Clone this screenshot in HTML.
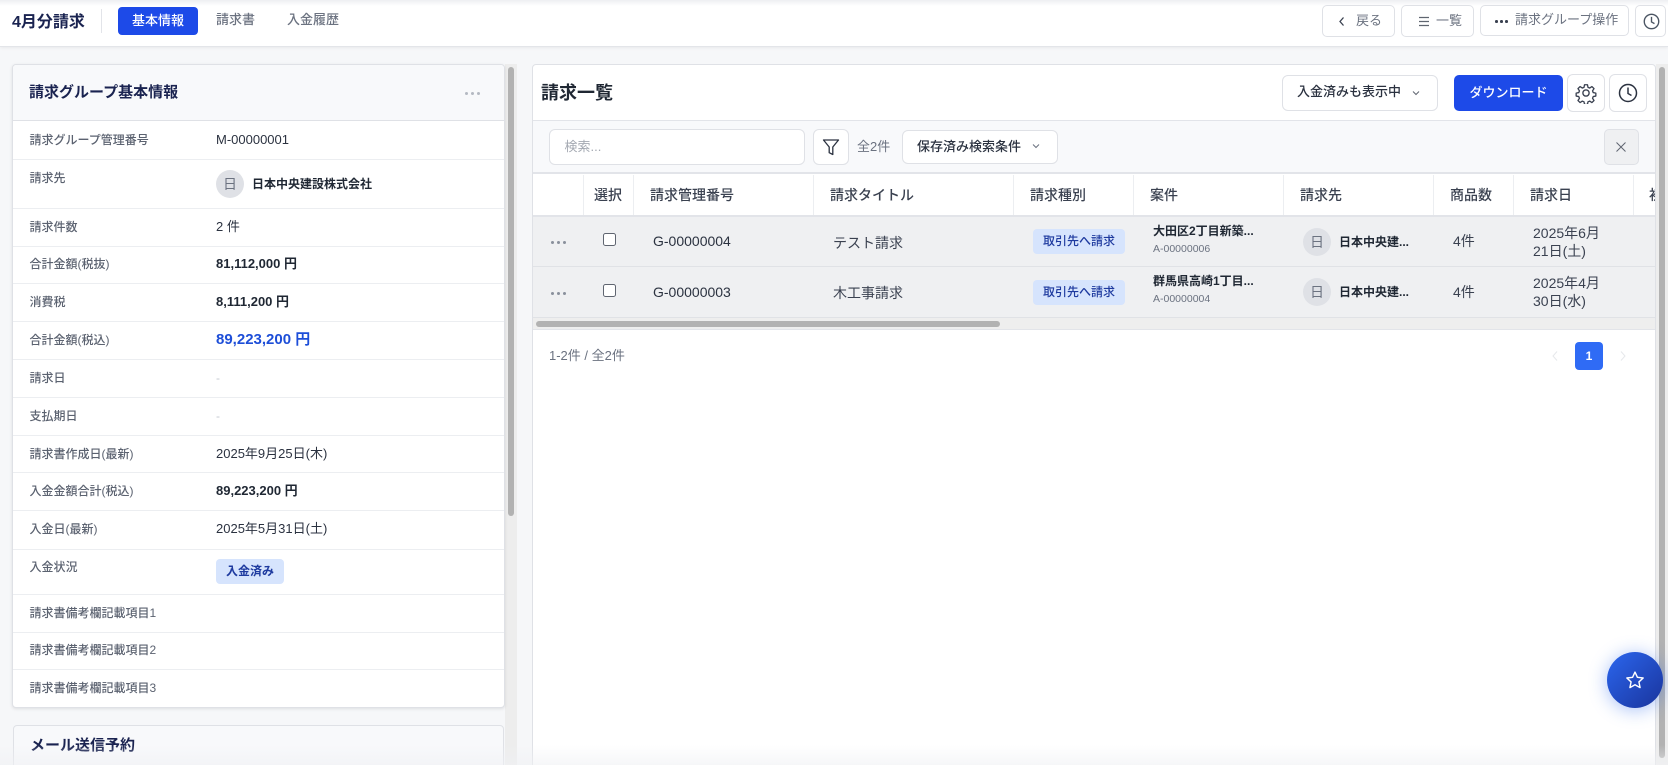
<!DOCTYPE html>
<html lang="ja">
<head>
<meta charset="utf-8">
<title>4月分請求</title>
<style>
*{box-sizing:border-box}
html,body{margin:0;padding:0;width:1668px;height:765px;overflow:hidden;background:#f6f7f9;font-family:"Liberation Sans","Noto Sans CJK JP",sans-serif;color:#1f2937}
#p{position:relative;width:1668px;height:765px;overflow:hidden;background:#f6f7f9}
.a{position:absolute}
.t{position:absolute;white-space:nowrap;line-height:20px;height:20px}
.btn{position:absolute;background:#fff;border:1px solid #dfe1e6;border-radius:5px}
.l{font-size:12px;color:#5b6270;left:29.5px;font-weight:500}
.v{font-size:13px;color:#2b3240;left:216px}
.b{font-weight:700;color:#1f2733}
.rl{position:absolute;left:13px;width:491px;height:1px;background:#eceef1}
.th{font-size:14px;color:#3a4150;font-weight:500;top:185px}
.cl{position:absolute;top:175px;width:1px;height:40px;background:#eceef1}
.av{position:absolute;width:28px;height:28px;border-radius:50%;background:#dfe1e6;color:#6b7280;font-size:14px;line-height:28px;text-align:center}
.bd{position:absolute;background:#d6e4fd;color:#1e3a9f;border-radius:4px;font-size:12px;font-weight:500;text-align:center;line-height:25px;height:25px}
.dots{position:absolute;width:3px;height:3px;border-radius:50%;background:#8a909c;box-shadow:6px 0 0 #8a909c,12px 0 0 #8a909c}
.cb{position:absolute;width:13px;height:13px;background:#fff;border:1px solid #5f6570;border-radius:2.5px}
svg{position:absolute;display:block}
</style>
</head>
<body>
<div id="p">

<!-- left panel -->
<div class="a" style="left:505px;top:64px;width:12px;height:701px;background:#ededed"></div>
<div class="a" style="left:508px;top:67px;width:6px;height:449px;background:#b2b2b2;border-radius:3px"></div>

<div class="a" style="left:12px;top:64px;width:493px;height:644px;background:#fff;border:1px solid #dfe1e6;border-radius:4px;box-shadow:0 1px 3px rgba(0,0,0,.1)"></div>
<div class="a" style="left:13px;top:65px;width:491px;height:56px;background:#f8f9fb;border-bottom:1px solid #dfe1e6;border-radius:4px 4px 0 0"></div>
<div class="t" style="left:29px;top:83px;font-size:15px;font-weight:700;color:#1a2350">請求グループ基本情報</div>
<div class="dots" style="left:465px;top:92px;background:#b4b9c2;box-shadow:6px 0 0 #b4b9c2,12px 0 0 #b4b9c2"></div>

<div class="rl" style="top:159px"></div>
<div class="rl" style="top:208px"></div>
<div class="rl" style="top:246px"></div>
<div class="rl" style="top:283px"></div>
<div class="rl" style="top:321px"></div>
<div class="rl" style="top:359px"></div>
<div class="rl" style="top:397px"></div>
<div class="rl" style="top:435px"></div>
<div class="rl" style="top:472px"></div>
<div class="rl" style="top:510px"></div>
<div class="rl" style="top:549px"></div>
<div class="rl" style="top:594px"></div>
<div class="rl" style="top:632px"></div>
<div class="rl" style="top:669px"></div>

<div class="t l" style="top:130px">請求グループ管理番号</div>
<div class="t v" style="top:130px">M-00000001</div>
<div class="t l" style="top:168px">請求先</div>
<div class="av" style="left:216px;top:170px">日</div>
<div class="t b" style="left:252px;top:174px;font-size:12px">日本中央建設株式会社</div>
<div class="t l" style="top:217px">請求件数</div>
<div class="t v" style="top:217px">2 件</div>
<div class="t l" style="top:254px">合計金額(税抜)</div>
<div class="t v b" style="top:254px">81,112,000 円</div>
<div class="t l" style="top:292px">消費税</div>
<div class="t v b" style="top:292px">8,111,200 円</div>
<div class="t l" style="top:330px">合計金額(税込)</div>
<div class="t v" style="top:330px;font-size:15px;font-weight:700;color:#1d4ed8">89,223,200 円</div>
<div class="t l" style="top:368px">請求日</div>
<div class="t v" style="top:368px;color:#c4c9d1;font-size:12px">-</div>
<div class="t l" style="top:406px">支払期日</div>
<div class="t v" style="top:406px;color:#c4c9d1;font-size:12px">-</div>
<div class="t l" style="top:444px">請求書作成日(最新)</div>
<div class="t v" style="top:444px">2025年9月25日(木)</div>
<div class="t l" style="top:481px">入金金額合計(税込)</div>
<div class="t v b" style="top:481px">89,223,200 円</div>
<div class="t l" style="top:519px">入金日(最新)</div>
<div class="t v" style="top:519px">2025年5月31日(土)</div>
<div class="t l" style="top:557px">入金状況</div>
<div class="bd" style="left:216px;top:559px;width:68px;font-weight:700">入金済み</div>
<div class="t l" style="top:603px">請求書備考欄記載項目1</div>
<div class="t l" style="top:640px">請求書備考欄記載項目2</div>
<div class="t l" style="top:678px">請求書備考欄記載項目3</div>

<div class="a" style="left:13px;top:725px;width:491px;height:60px;background:#f8f9fb;border:1px solid #dfe1e6;border-radius:4px"></div>
<div class="t" style="left:30px;top:736px;font-size:15px;font-weight:700;color:#1a2350">メール送信予約</div>

<!-- right card -->
<div class="a" style="left:532px;top:64px;width:1124px;height:720px;background:#fff;border:1px solid #dfe1e6;border-radius:4px 4px 0 0"></div>
<div class="a" style="left:533px;top:120px;width:1122px;height:54px;background:#f8f9fb;border-top:1px solid #e2e4e9;border-bottom:2px solid #e2e4e9"></div>
<div class="t" style="left:541px;top:83px;font-size:18px;font-weight:700;color:#1f2733">請求一覧</div>

<div class="btn" style="left:1282px;top:75px;width:156px;height:36px;border-radius:6px"></div>
<div class="t" style="left:1297px;top:82px;font-size:13px;font-weight:500;color:#2b3240">入金済みも表示中</div>
<svg style="left:1411px;top:88px" width="10" height="10" viewBox="0 0 10 10"><path d="M2 3.500L5 6.500l3-3" fill="none" stroke="#5f6570" stroke-width="1"/></svg>
<div class="a" style="left:1454px;top:75px;width:109px;height:36px;background:#1d4ae8;border-radius:5px;color:#fff;font-size:13px;font-weight:500;line-height:35px;text-align:center">ダウンロード</div>
<div class="btn" style="left:1567px;top:74px;width:38px;height:38px;border-radius:6px"></div>
<svg style="left:1575px;top:82px" width="22" height="22" viewBox="0 0 24 24" fill="none" stroke="#3a4150" stroke-width="1.500" stroke-linejoin="round"><path d="M10.300 2.500h3.400l.6 3 1.900.8 2.600-1.700 2.400 2.400-1.700 2.600.8 1.900 3 .6v3.400l-3 .6-.8 1.900 1.700 2.600-2.400 2.400-2.600-1.700-1.900.8-.6 3h-3.400l-.6-3-1.900-.8-2.600 1.700-2.400-2.400 1.700-2.600-.8-1.900-3-.6v-3.400l3-.6.8-1.900-1.700-2.600 2.400-2.400 2.600 1.700 1.900-.8z" transform="translate(.6 .6) scale(.95)"/><circle cx="12" cy="12" r="3.400"/></svg>
<div class="btn" style="left:1609px;top:74px;width:38px;height:38px;border-radius:6px"></div>
<svg style="left:1618px;top:83px" width="20" height="20" viewBox="0 0 20 20" fill="none" stroke="#2b3240" stroke-width="1.500"><circle cx="10" cy="10" r="8.500"/><path d="M10 4.500V10.500l3.500 2"/></svg>

<!-- toolbar -->
<div class="btn" style="left:549px;top:129px;width:256px;height:36px;border-radius:6px"></div>
<div class="t" style="left:564.5px;top:137px;font-size:13px;color:#a4a9b2">検索...</div>
<div class="btn" style="left:813px;top:129px;width:36px;height:36px;border-radius:6px"></div>
<svg style="left:822px;top:138px" width="18" height="18" viewBox="0 0 18 18" fill="none" stroke="#2b3240" stroke-width="1.300" stroke-linejoin="round"><path d="M1.500 2h15l-5.700 7v7.500l-3.600-1.800V9z"/></svg>
<div class="t" style="left:857px;top:137px;font-size:13px;color:#6b7280">全2件</div>
<div class="btn" style="left:902px;top:130px;width:156px;height:34px;border-radius:6px"></div>
<div class="t" style="left:917px;top:137px;font-size:13px;font-weight:500;color:#2b3240">保存済み検索条件</div>
<svg style="left:1031px;top:141px" width="10" height="10" viewBox="0 0 10 10"><path d="M2 3.500L5 6.500l3-3" fill="none" stroke="#6b7280" stroke-width="1"/></svg>
<div class="a" style="left:1604px;top:129px;width:35px;height:36px;background:#eff0f2;border:1px solid #dfe1e6;border-radius:5px"></div>
<svg style="left:1615px;top:141px" width="12" height="12" viewBox="0 0 12 12"><path d="M1.500 1.500l9 9M10.500 1.500l-9 9" stroke="#5f6570" stroke-width="1" fill="none"/></svg>

<!-- table head -->
<div class="cl" style="left:583px"></div>
<div class="cl" style="left:633px"></div>
<div class="cl" style="left:813px"></div>
<div class="cl" style="left:1013px"></div>
<div class="cl" style="left:1133px"></div>
<div class="cl" style="left:1283px"></div>
<div class="cl" style="left:1433px"></div>
<div class="cl" style="left:1513px"></div>
<div class="cl" style="left:1633px"></div>
<div class="t th" style="left:594px">選択</div>
<div class="t th" style="left:650px">請求管理番号</div>
<div class="t th" style="left:830px">請求タイトル</div>
<div class="t th" style="left:1030px">請求種別</div>
<div class="t th" style="left:1150px">案件</div>
<div class="t th" style="left:1300px">請求先</div>
<div class="t th" style="left:1450px">商品数</div>
<div class="t th" style="left:1530px">請求日</div>
<div class="a" style="left:1649px;top:175px;width:6px;height:40px;overflow:hidden"><div class="t th" style="left:0;top:10px">初</div></div>

<!-- rows -->
<div class="a" style="left:533px;top:215px;width:1122px;height:2px;background:#e2e4e9"></div>
<div class="a" style="left:533px;top:217px;width:1122px;height:50px;background:#eff0f2;border-bottom:1px solid #e0e2e6"></div>
<div class="a" style="left:533px;top:267px;width:1122px;height:51px;background:#eff0f2;border-bottom:1px solid #e0e2e6"></div>
<div class="a" style="left:533px;top:318px;width:1122px;height:12px;background:#eeeeee;border-bottom:1px solid #e2e4e9"></div>
<div class="a" style="left:536px;top:321px;width:464px;height:6px;background:#b2b2b2;border-radius:3px"></div>

<div class="dots" style="left:551px;top:241px"></div>
<div class="cb" style="left:603px;top:233px"></div>
<div class="t" style="left:653px;top:231px;font-size:14px;color:#2b3240">G-00000004</div>
<div class="t" style="left:833px;top:233px;font-size:14px;color:#3a4150">テスト請求</div>
<div class="bd" style="left:1033px;top:229px;width:92px">取引先へ請求</div>
<div class="t b" style="left:1153px;top:221px;font-size:12px">大田区2丁目新築...</div>
<div class="t" style="left:1153px;top:239px;font-size:10.500px;color:#6b7280">A-00000006</div>
<div class="av" style="left:1303px;top:228px">日</div>
<div class="t b" style="left:1339px;top:232px;font-size:12px">日本中央建...</div>
<div class="t" style="left:1453px;top:231px;font-size:14px;color:#3a4150">4件</div>
<div class="a" style="left:1533px;top:224px;font-size:14px;line-height:18px;color:#3a4150;white-space:nowrap">2025年6月<br>21日(土)</div>

<div class="dots" style="left:551px;top:292px"></div>
<div class="cb" style="left:603px;top:284px"></div>
<div class="t" style="left:653px;top:282px;font-size:14px;color:#2b3240">G-00000003</div>
<div class="t" style="left:833px;top:283px;font-size:14px;color:#3a4150">木工事請求</div>
<div class="bd" style="left:1033px;top:280px;width:92px">取引先へ請求</div>
<div class="t b" style="left:1153px;top:271px;font-size:12px">群馬県高崎1丁目...</div>
<div class="t" style="left:1153px;top:289px;font-size:10.500px;color:#6b7280">A-00000004</div>
<div class="av" style="left:1303px;top:278px">日</div>
<div class="t b" style="left:1339px;top:282px;font-size:12px">日本中央建...</div>
<div class="t" style="left:1453px;top:282px;font-size:14px;color:#3a4150">4件</div>
<div class="a" style="left:1533px;top:274px;font-size:14px;line-height:18px;color:#3a4150;white-space:nowrap">2025年4月<br>30日(水)</div>

<!-- pagination -->
<div class="t" style="left:549px;top:346px;font-size:13px;color:#6b7280">1-2件 / 全2件</div>
<svg style="left:1551px;top:350px" width="8" height="12" viewBox="0 0 8 12"><path d="M6 1.500L2 6l4 4.500" fill="none" stroke="#e6e8eb" stroke-width="1"/></svg>
<div class="a" style="left:1575px;top:342px;width:28px;height:28px;background:#2f6bf5;border-radius:4px;color:#fff;font-size:12px;font-weight:700;line-height:28px;text-align:center">1</div>
<svg style="left:1619px;top:350px" width="8" height="12" viewBox="0 0 8 12"><path d="M2 1.500L6 6l-4 4.500" fill="none" stroke="#e6e8eb" stroke-width="1"/></svg>

<!-- right scrollbar -->
<div class="a" style="left:1656px;top:64px;width:12px;height:701px;background:#ededed"></div>
<div class="a" style="left:1659px;top:67px;width:6px;height:691px;background:#b2b2b2;border-radius:3px"></div>

<!-- bottom fade -->
<div class="a" style="left:0;top:745px;width:1668px;height:20px;background:linear-gradient(to bottom,rgba(246,247,249,0),rgba(240,241,244,.6))"></div>

<!-- FAB -->
<div class="a" style="left:1607px;top:652px;width:56px;height:56px;border-radius:50%;background:linear-gradient(135deg,#2b66ee,#1a349c);box-shadow:0 2px 18px rgba(37,99,235,.4)"></div>
<svg style="left:1625px;top:670px" width="20" height="20" viewBox="0 0 24 24" fill="none" stroke="#fff" stroke-width="1.700" stroke-linejoin="round"><path d="M12 2.500l2.900 6.300 6.900.8-5.100 4.700 1.400 6.800L12 17.700l-6.100 3.400 1.400-6.800-5.100-4.700 6.900-.8z"/></svg>

<!-- header -->
<div class="a" style="left:0;top:0;width:1668px;height:47px;background:#fff;border-bottom:1px solid #e3e5e9;box-shadow:0 1px 3px rgba(0,0,0,.06)"></div>
<div class="a" style="left:0;top:0;width:1668px;height:6px;background:linear-gradient(to bottom,#eeeff2,#fff)"></div>
<div class="t" style="left:12px;top:13px;font-size:16px;font-weight:700;color:#1a2350">4月分請求</div>
<div class="a" style="left:101px;top:9px;width:1px;height:24px;background:#e2e4e9"></div>
<div class="a" style="left:118px;top:7px;width:80px;height:28px;background:#1d4ae8;border-radius:4px;color:#fff;font-size:13px;line-height:27px;text-align:center;font-weight:500">基本情報</div>
<div class="t" style="left:216px;top:10px;font-size:13px;color:#6b7280;font-weight:500">請求書</div>
<div class="t" style="left:287px;top:10px;font-size:13px;color:#6b7280;font-weight:500">入金履歴</div>

<div class="btn" style="left:1322px;top:5px;width:73px;height:32px"></div>
<svg style="left:1338px;top:16px" width="8" height="11" viewBox="0 0 8 11"><path d="M5.500 1.500L2 5.500l3.500 4" fill="none" stroke="#3a4150" stroke-width="1.300"/></svg>
<div class="t" style="left:1356px;top:11px;font-size:13px;color:#6b7280">戻る</div>
<div class="btn" style="left:1401px;top:5px;width:73px;height:32px"></div>
<svg style="left:1419px;top:16px" width="10" height="11" viewBox="0 0 10 11"><path d="M0 1.500h10M0 5.500h10M0 9.500h10" stroke="#5f6570" stroke-width="1.300" fill="none"/></svg>
<div class="t" style="left:1436px;top:11px;font-size:13px;color:#6b7280">一覧</div>
<div class="btn" style="left:1480px;top:5px;width:149px;height:31px"></div>
<div class="dots" style="left:1495px;top:20px;width:2.500px;height:2.500px;background:#3a4150;box-shadow:5px 0 0 #3a4150,10px 0 0 #3a4150"></div>
<div class="t" style="left:1515px;top:10px;font-size:13px;color:#6b7280">請求グループ操作</div>
<div class="btn" style="left:1635px;top:5px;width:31px;height:32px"></div>
<svg style="left:1642.500px;top:13px" width="17" height="17" viewBox="0 0 20 20" fill="none" stroke="#4b5563" stroke-width="1.600"><circle cx="10" cy="10" r="8.500"/><path d="M10 4.500V10.500l3.500 2"/></svg>

</div>
</body>
</html>
